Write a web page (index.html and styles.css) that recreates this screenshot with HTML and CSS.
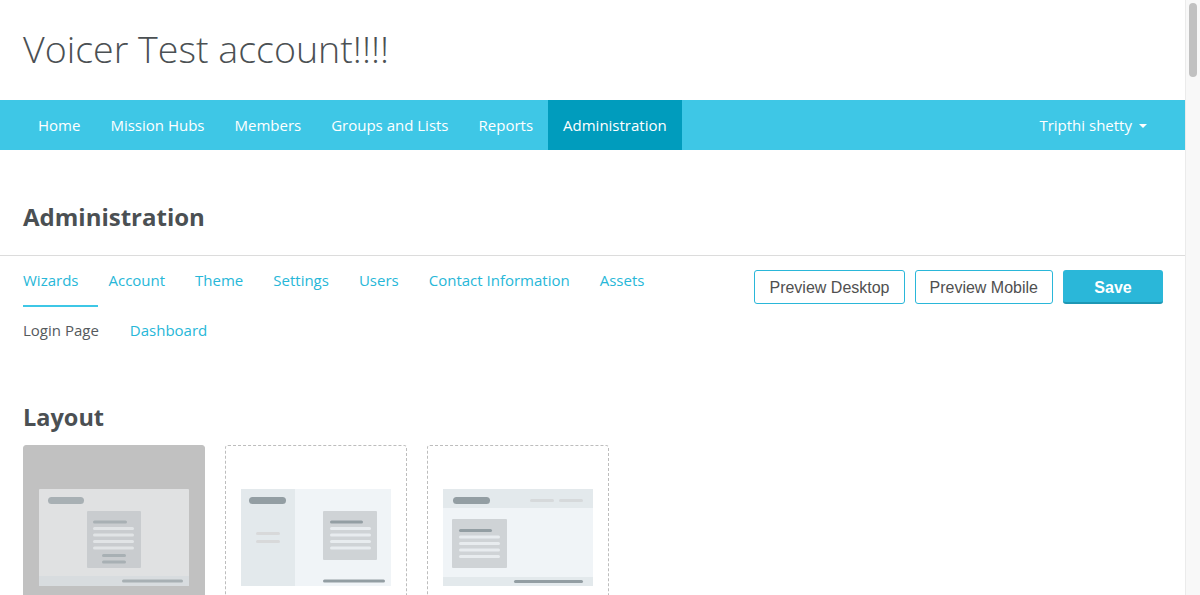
FILE: index.html
```html
<!DOCTYPE html>
<html lang="en">
<head>
<meta charset="utf-8">
<title>Voicer Test account!!!! - Administration</title>
<link rel="stylesheet" href="styles.css">
</head>
<body>
<header class="site-header">
  <h1 class="site-title">Voicer Test account!!!!</h1>
</header>
<nav class="navbar">
  <ul class="nav-main">
    <li><a class="nav-link" href="#">Home</a></li>
    <li><a class="nav-link" href="#">Mission Hubs</a></li>
    <li><a class="nav-link" href="#">Members</a></li>
    <li><a class="nav-link" href="#">Groups and Lists</a></li>
    <li><a class="nav-link" href="#">Reports</a></li>
    <li><a class="nav-link is-active" href="#">Administration</a></li>
  </ul>
  <a class="nav-link nav-user" href="#">Tripthi shetty <span class="caret"></span></a>
</nav>
<main class="page">
  <div class="page-head">
    <h2 class="page-title">Administration</h2>
  </div>
  <div class="admin-bar">
    <div class="admin-tabs">
      <ul class="tabs">
        <li><a class="tab is-active" href="#">Wizards</a></li>
        <li><a class="tab" href="#">Account</a></li>
        <li><a class="tab" href="#">Theme</a></li>
        <li><a class="tab" href="#">Settings</a></li>
        <li><a class="tab" href="#">Users</a></li>
        <li><a class="tab" href="#">Contact Information</a></li>
        <li><a class="tab" href="#">Assets</a></li>
      </ul>
      <ul class="subtabs">
        <li><a class="subtab is-active" href="#">Login Page</a></li>
        <li><a class="subtab" href="#">Dashboard</a></li>
      </ul>
    </div>
    <div class="actions">
      <button class="btn btn-outline" type="button">Preview Desktop</button>
      <button class="btn btn-outline" type="button">Preview Mobile</button>
      <button class="btn btn-primary" type="button">Save</button>
    </div>
  </div>
  <section class="layout-section">
    <h3 class="section-title">Layout</h3>
    <div class="layout-options">
      <div class="layout-card is-selected">
        <svg class="layout-preview" width="150" height="97" viewBox="0 0 150 97">
          <rect x="0" y="0" width="150" height="97" rx="1" fill="#e0e1e2"/>
          <rect x="0" y="87" width="150" height="10" fill="#d8dcdf"/>
          <rect x="9" y="8" width="36" height="7" rx="3.5" fill="#a8b0b4"/>
          <rect x="48" y="22" width="54" height="57" rx="1" fill="#c9cccf"/>
          <rect x="54" y="31.5" width="34" height="3" rx="1.5" fill="#a8b0b4"/>
          <rect x="54" y="38" width="41" height="3" rx="1.5" fill="#e1e4e6"/>
          <rect x="54" y="44.5" width="41" height="3" rx="1.5" fill="#e1e4e6"/>
          <rect x="54" y="51" width="41" height="3" rx="1.5" fill="#e1e4e6"/>
          <rect x="54" y="57.5" width="41" height="3" rx="1.5" fill="#e1e4e6"/>
          <rect x="63" y="65" width="24" height="3" rx="1.5" fill="#a8b0b4"/>
          <rect x="63" y="71.5" width="24" height="3" rx="1.5" fill="#a8b0b4"/>
          <rect x="83" y="90.5" width="61" height="3" rx="1.5" fill="#a8b0b4"/>
        </svg>
      </div>
      <div class="layout-card">
        <svg class="layout-preview" width="150" height="97" viewBox="0 0 150 97">
          <rect x="0" y="0" width="150" height="97" fill="#f0f4f7"/>
          <rect x="0" y="0" width="54" height="97" fill="#e3e9ec"/>
          <rect x="8" y="8" width="37" height="7" rx="3.5" fill="#939ea3"/>
          <rect x="15" y="43" width="24" height="3" rx="1.5" fill="#d8d9da"/>
          <rect x="15" y="51" width="24" height="3" rx="1.5" fill="#d8d9da"/>
          <rect x="82" y="22" width="54" height="49" rx="1" fill="#cfd3d6"/>
          <rect x="89" y="31.5" width="33" height="3" rx="1.5" fill="#939ea3"/>
          <rect x="89" y="38" width="41" height="3" rx="1.5" fill="#e8ecef"/>
          <rect x="89" y="44.5" width="41" height="3" rx="1.5" fill="#e8ecef"/>
          <rect x="89" y="51" width="41" height="3" rx="1.5" fill="#e8ecef"/>
          <rect x="89" y="57.5" width="41" height="3" rx="1.5" fill="#e8ecef"/>
          <rect x="82" y="90.5" width="62" height="3" rx="1.5" fill="#939ea3"/>
        </svg>
      </div>
      <div class="layout-card">
        <svg class="layout-preview" width="150" height="97" viewBox="0 0 150 97">
          <rect x="0" y="0" width="150" height="97" fill="#f0f4f7"/>
          <rect x="0" y="0" width="150" height="19" fill="#e3e9ec"/>
          <rect x="0" y="88" width="150" height="9" fill="#e3e9ec"/>
          <rect x="10" y="8" width="37" height="7" rx="3.5" fill="#939ea3"/>
          <rect x="87" y="10" width="24" height="3" rx="1.5" fill="#d6d9db"/>
          <rect x="116" y="10" width="24" height="3" rx="1.5" fill="#d6d9db"/>
          <rect x="9" y="30" width="55" height="49" rx="1" fill="#cfd3d6"/>
          <rect x="16" y="40" width="33" height="3" rx="1.5" fill="#939ea3"/>
          <rect x="16" y="46.5" width="41" height="3" rx="1.5" fill="#e8ecef"/>
          <rect x="16" y="53" width="41" height="3" rx="1.5" fill="#e8ecef"/>
          <rect x="16" y="59.5" width="41" height="3" rx="1.5" fill="#e8ecef"/>
          <rect x="16" y="66" width="41" height="3" rx="1.5" fill="#e8ecef"/>
          <rect x="71" y="91" width="69" height="3" rx="1.5" fill="#939ea3"/>
        </svg>
      </div>
    </div>
  </section>
</main>
<div class="scrollbar" aria-hidden="true"><div class="scrollbar-thumb"></div></div>
</body>
</html>
```

FILE: styles.css
```css
* {
  box-sizing: border-box;
}

html, body {
  margin: 0;
  padding: 0;
}

body {
  font-family: "Open Sans", "DejaVu Sans", sans-serif;
  color: #4b5053;
  background: #ffffff;
  padding-right: 15px;
}

ul {
  list-style: none;
  margin: 0;
  padding: 0;
}

a {
  text-decoration: none;
}

/* ---------- header ---------- */
.site-header {
  height: 100px;
  padding: 27px 23px 0;
}

.site-title {
  margin: 0;
  font-size: 37.6px;
  line-height: 44px;
  font-weight: 300;
  color: #4b5053;
}

/* ---------- navbar ---------- */
.navbar {
  height: 50px;
  background: #3ec7e6;
  display: flex;
  justify-content: space-between;
  padding: 0 22px 0 23px;
}

.nav-main {
  display: flex;
}

.nav-link {
  display: block;
  padding: 0 15px;
  line-height: 50px;
  font-size: 15px;
  color: #ffffff;
}

.nav-link.is-active {
  background: #009cbd;
}

.nav-user {
  display: flex;
  align-items: center;
  gap: 7px;
  padding-right: 16px;
}

.caret {
  width: 0;
  height: 0;
  border-left: 4px solid transparent;
  border-right: 4px solid transparent;
  border-top: 4px solid #ffffff;
  margin-top: 1px;
}

/* ---------- page ---------- */
.page-head {
  padding: 50px 23px 22px;
  border-bottom: 1px solid #dcdcdc;
}

.page-title {
  margin: 0;
  font-size: 24px;
  line-height: 33px;
  font-weight: 700;
  color: #4b5053;
}

.admin-bar {
  display: flex;
  justify-content: space-between;
  align-items: flex-start;
  padding: 0 22px 0 23px;
}

.tabs {
  display: flex;
  padding-top: 13px;
}

.tab {
  display: block;
  font-size: 15px;
  line-height: 22px;
  padding: 0 20px 14px 0;
  margin-right: 10px;
  border-bottom: 2px solid transparent;
  color: #27b7d8;
}

.tab.is-active {
  border-bottom-color: #3ec7e6;
}

.subtabs {
  display: flex;
  gap: 31px;
  margin-top: 12px;
}

.subtab {
  display: block;
  font-size: 15px;
  line-height: 22px;
  color: #27b7d8;
}

.subtab.is-active {
  color: #555a5d;
}

.actions {
  display: flex;
  gap: 10px;
  margin-top: 14px;
  margin-left: -1px;
}

.btn {
  height: 34px;
  padding: 2px 14px 0;
  border-radius: 3px;
  font-family: "Liberation Sans", Arial, sans-serif;
  font-size: 16px;
  cursor: pointer;
}

.btn-outline {
  background: #ffffff;
  border: 1px solid #2ab7d9;
  color: #505050;
}

.btn-primary {
  width: 100px;
  padding-top: 3px;
  background: #2ab7d9;
  border: 0;
  border-bottom: 2px solid #1e97b4;
  color: #ffffff;
  font-weight: 700;
}

/* ---------- layout section ---------- */
.layout-section {
  padding: 61px 23px 0;
}

.section-title {
  margin: 0 0 12px;
  font-size: 23.5px;
  line-height: 31px;
  font-weight: 700;
  color: #4b5053;
}

.layout-options {
  display: flex;
  gap: 20px;
}

.layout-card {
  width: 182px;
  height: 182px;
  padding: 44px 16px 0;
  border-radius: 3px;
  border: 1px dashed #bdbdbd;
}

.layout-card.is-selected {
  background: #c1c1c1;
  border: 1px solid #c1c1c1;
}

.layout-card .layout-preview {
  display: block;
  margin: -1px 0 0 -1px;
}

/* ---------- window scrollbar ---------- */
.scrollbar {
  position: fixed;
  top: 0;
  right: 0;
  width: 15px;
  height: 100vh;
  background: #f8f8f8;
  border-left: 1px solid #ebebeb;
  padding: 3px 3px 0 3px;
}

.scrollbar-thumb {
  width: 8px;
  height: 74px;
  border-radius: 4px;
  background: #c1c1c1;
}
```
